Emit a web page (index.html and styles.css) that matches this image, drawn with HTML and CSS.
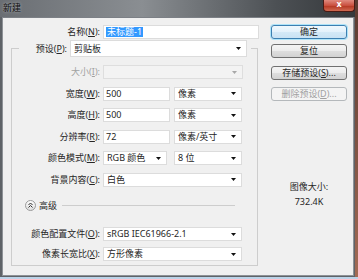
FILE: index.html
```html
<!DOCTYPE html>
<html lang="zh-CN">
<head>
<meta charset="utf-8">
<title>新建</title>
<link rel="stylesheet" href="styles.css">
</head>
<body>
<div class="screen">
  <div class="window">
    <div class="titlebar">
      <span class="title">新建</span>
      <div class="close">x</div>
    </div>
    <div class="client">
      <div class="left">
        <div class="row">
          <span class="lbl">名称(<u>N</u>):</span>
          <div class="field name"><span class="sel">未标题-1</span></div>
        </div>
        <fieldset class="group">
          <legend class="legend">
            <div class="preset">
              <span class="plbl">预设(<u>P</u>):</span>
              <div class="field select wpreset"><span class="txt">剪贴板</span><svg class="arrow" width="5" height="3" viewBox="0 0 5 3"><polygon points="0,0 5,0 2.5,3"/></svg></div>
            </div>
          </legend>
          <div class="grow first">
            <span class="glbl dis">大小(<u>I</u>):</span>
            <div class="field select disabled wsize"><span class="txt"></span><svg class="arrow" width="5" height="3" viewBox="0 0 5 3"><polygon points="0,0 5,0 2.5,3"/></svg></div>
          </div>
          <div class="grow">
            <span class="glbl">宽度(<u>W</u>):</span>
            <div class="field wnum"><span class="txt">500</span></div>
            <div class="field select wunit"><span class="txt">像素</span><svg class="arrow" width="5" height="3" viewBox="0 0 5 3"><polygon points="0,0 5,0 2.5,3"/></svg></div>
          </div>
          <div class="grow">
            <span class="glbl">高度(<u>H</u>):</span>
            <div class="field wnum"><span class="txt">500</span></div>
            <div class="field select wunit"><span class="txt">像素</span><svg class="arrow" width="5" height="3" viewBox="0 0 5 3"><polygon points="0,0 5,0 2.5,3"/></svg></div>
          </div>
          <div class="grow">
            <span class="glbl">分辨率(<u>R</u>):</span>
            <div class="field wnum"><span class="txt">72</span></div>
            <div class="field select wunit"><span class="txt">像素/英寸</span><svg class="arrow" width="5" height="3" viewBox="0 0 5 3"><polygon points="0,0 5,0 2.5,3"/></svg></div>
          </div>
          <div class="grow">
            <span class="glbl">颜色模式(<u>M</u>):</span>
            <div class="field select wmode"><span class="txt">RGB 颜色</span><svg class="arrow" width="5" height="3" viewBox="0 0 5 3"><polygon points="0,0 5,0 2.5,3"/></svg></div>
            <div class="field select wbits"><span class="txt">8 位</span><svg class="arrow" width="5" height="3" viewBox="0 0 5 3"><polygon points="0,0 5,0 2.5,3"/></svg></div>
          </div>
          <div class="grow">
            <span class="glbl">背景内容(<u>C</u>):</span>
            <div class="field select wfull"><span class="txt">白色</span><svg class="arrow" width="5" height="3" viewBox="0 0 5 3"><polygon points="0,0 5,0 2.5,3"/></svg></div>
          </div>
          <div class="adv">
            <svg class="toggle" width="11" height="11" viewBox="0 0 11 11">
              <defs><linearGradient id="tg" x1="0" y1="0" x2="0" y2="1"><stop offset="0" stop-color="#ffffff"/><stop offset="1" stop-color="#dcdcdc"/></linearGradient></defs>
              <circle cx="5.5" cy="5.5" r="5" fill="url(#tg)" stroke="#9a9a9a" stroke-width="1"/>
              <polyline points="3.5,5 5.5,3 7.5,5" fill="none" stroke="#333" stroke-width="1"/>
              <polyline points="3.5,7.5 5.5,5.5 7.5,7.5" fill="none" stroke="#333" stroke-width="1"/>
            </svg>
            <span class="advtxt">高级</span>
            <div class="sep"></div>
          </div>
          <div class="grow profile">
            <span class="glbl">颜色配置文件(<u>O</u>):</span>
            <div class="field select wfull"><span class="txt">sRGB IEC61966-2.1</span><svg class="arrow" width="5" height="3" viewBox="0 0 5 3"><polygon points="0,0 5,0 2.5,3"/></svg></div>
          </div>
          <div class="grow aspect">
            <span class="glbl">像素长宽比(<u>X</u>):</span>
            <div class="field select wfull"><span class="txt">方形像素</span><svg class="arrow" width="5" height="3" viewBox="0 0 5 3"><polygon points="0,0 5,0 2.5,3"/></svg></div>
          </div>
        </fieldset>
      </div>
      <div class="right">
        <div class="btn default">确定</div>
        <div class="btn b2">复位</div>
        <div class="btn b3">存储预设(<u>S</u>)...</div>
        <div class="btn b4 off">删除预设(<u>D</u>)...</div>
        <div class="imgsize">
          <div class="islbl">图像大小:</div>
          <div class="isval">732.4K</div>
        </div>
      </div>
    </div>
  </div>
  <div class="desk"></div>
</div>
<div class="taskbar"></div>
</body>
</html>
```

FILE: styles.css
```css
* { box-sizing: border-box; }
html, body { margin: 0; padding: 0; }
body {
  width: 358px;
  height: 279px;
  overflow: hidden;
  font-family: "Noto Sans", "Noto Sans CJK SC", sans-serif;
  font-size: 9px;
  color: #262626;
  background: #7d5040;
}
u { text-decoration: underline; text-underline-offset: 1px; }

.screen { display: flex; height: 277px; }
.window {
  width: 355px;
  display: flex;
  flex-direction: column;
  background: #5f6368;
}
.desk { flex: 1; background: linear-gradient(#5a3a30, #a36b55); }
.taskbar { height: 2px; background: #bcd3e8; }

.titlebar {
  height: 17px;
  flex: 0 0 17px;
  display: flex;
  align-items: flex-start;
  justify-content: space-between;
  background: linear-gradient(90deg, #6a6e73 0%, #8a8e92 40%, #4c5054 78%, #35383b 100%);
}
.title {
  line-height: 15px;
  padding-left: 3px;
  color: #0e0e0e;
  text-shadow: 0 0 3px rgba(255,255,255,0.55);
}
.close {
  width: 32px;
  height: 12px;
  border: 1px solid #4a1a14;
  border-top: 0;
  border-radius: 0 0 4px 4px;
  background: linear-gradient(#e08a7e, #c9503f 50%, #b3341f 51%, #d06a52);
  color: #fff;
  font-family: "DejaVu Sans", sans-serif;
  font-weight: bold;
  font-size: 8px;
  line-height: 10px;
  text-align: center;
}

.client {
  flex: 1;
  margin: 0 1px 1px 2px;
  background: #f0f0f0;
  border: 1px solid #8e9297;
  border-top-color: #7c8086;
  display: flex;
}

.left {
  width: 256px;
  display: flex;
  flex-direction: column;
  padding-top: 7px;
}
.row { display: flex; align-items: center; height: 14px; }
.lbl { flex: 0 0 97px; text-align: right; line-height: 12px; }

.field {
  height: 14px;
  background: #fff;
  border: 1px solid #dcdcdc;
  display: flex;
  align-items: center;
  padding-left: 2px;
  line-height: 12px;
  white-space: nowrap;
  overflow: hidden;
}
.name { width: 156px; margin-left: 3px; }
.sel {
  display: inline-block;
  height: 10px;
  line-height: 10px;
  padding: 0 1px;
  background: #3399ff;
  color: #fff;
}
.select .txt { flex: 1; padding-left: 1px; }
.arrow { flex: 0 0 5px; margin-right: 5px; fill: #111; }
.disabled { background: #f3f3f3; border-color: #dedede; }
.disabled .arrow { fill: #a8a8a8; }

.group {
  margin: 1px 0 0 8px;
  width: 247px;
  min-width: 0;
  border: 1px solid #cdcdcd;
  padding: 0 0 4px 0;
}
.legend { margin-left: 7px; padding: 0 4px 0 0; }
.preset { display: flex; align-items: center; height: 17px; }
.plbl { flex: 0 0 48px; text-align: right; line-height: 12px; }
.wpreset { width: 177px; height: 17px; margin-left: 3px; }

.grow { display: flex; align-items: center; height: 14px; margin-top: 7.5px; }
.grow.first { margin-top: 8px; }
.glbl { flex: 0 0 88px; text-align: right; line-height: 12px; }
.dis { color: #a2a2a2; }
.wsize { width: 140px; margin-left: 3px; }
.wnum { width: 67px; margin-left: 3px; }
.wunit { width: 68px; margin-left: 4px; }
.wmode { width: 64px; margin-left: 3px; }
.wbits { width: 68px; margin-left: 7px; }
.wfull { width: 139px; margin-left: 3px; }

.adv {
  display: flex;
  align-items: center;
  height: 11px;
  margin-top: 13.5px;
  padding-left: 13px;
}
.toggle { flex: 0 0 11px; }
.advtxt { margin-left: 3px; line-height: 12px; }
.sep { flex: 0 0 173px; height: 1px; margin-left: 5px; background: #cdcdcd; }
.grow.profile { margin-top: 16px; }
.grow.aspect { margin-top: 6px; }

.right {
  width: 76px;
  margin-left: 12px;
  padding-top: 7px;
  display: flex;
  flex-direction: column;
}
.btn {
  height: 14px;
  border: 1px solid #707070;
  border-radius: 3px;
  background: linear-gradient(#f4f4f4, #ececec 50%, #dedede 51%, #d2d2d2);
  line-height: 12px;
  text-align: center;
  white-space: nowrap;
}
.default {
  border-color: #3c7fb1;
  background: linear-gradient(#f0f8fd, #e3f1fb 50%, #d4e9f7 51%, #c9e2f4);
  box-shadow: 0 0 0 1px #aee3f8;
}
.b2 { margin-top: 5px; }
.b3 { margin-top: 8px; }
.b4 { margin-top: 7px; }
.off {
  border-color: #b4b8bb;
  background: #f4f4f4;
  color: #a0a0a0;
}
.imgsize { margin-top: 80px; text-align: center; line-height: 12px; }
.isval { margin-top: 3px; }
```
